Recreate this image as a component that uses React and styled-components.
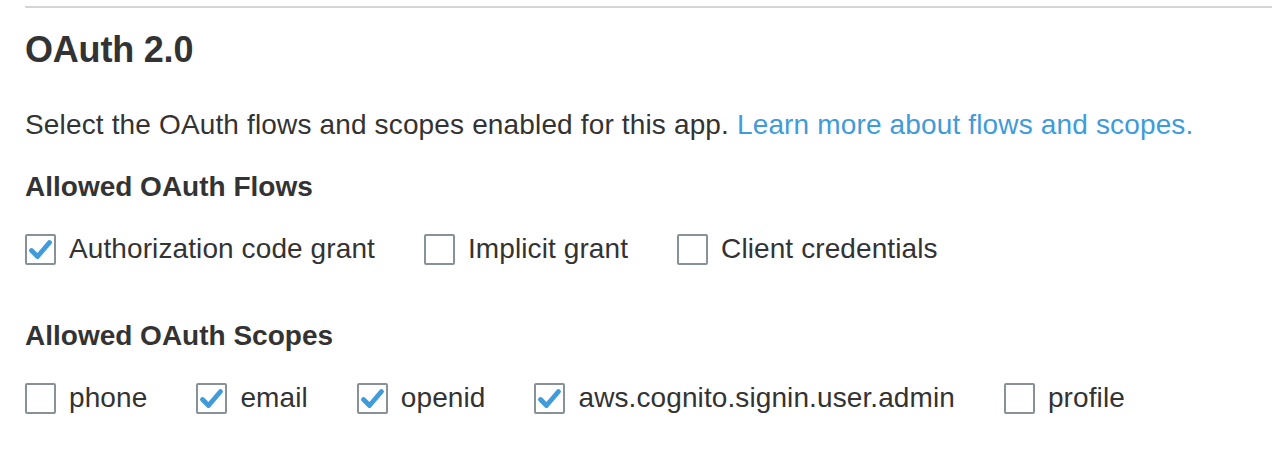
import React from "react";
import styled, { createGlobalStyle } from "styled-components";

const Global = createGlobalStyle`
  html, body { margin: 0; padding: 0; background: #fff; }
  body { font-family: "Liberation Sans", Helvetica, Arial, sans-serif; color: #333; }
`;

const Page = styled.div`
  padding-left: 25px;
`;

const Rule = styled.div`
  margin-top: 6px;
  height: 2px;
  background: #d5d5d5;
`;

const Title = styled.h2`
  margin: 22px 0 0;
  font-size: 36px;
  line-height: 40px;
  font-weight: 700;
  letter-spacing: -0.2px;
  color: #333;
`;

const Description = styled.p`
  margin: 39px 0 0;
  font-size: 28px;
  line-height: 32px;
  letter-spacing: 0.15px;
  color: #333;
`;

const Link = styled.a`
  color: #3f9bd9;
  text-decoration: none;
`;

const SectionHeader = styled.h3`
  margin: ${(p) => p.$gap}px 0 0;
  font-size: 28px;
  line-height: 32px;
  font-weight: 700;
  color: #333;
`;

const OptionRow = styled.div`
  display: flex;
  align-items: center;
  margin-top: ${(p) => p.$gap}px;
  gap: 49px;
`;

const Option = styled.label`
  display: flex;
  align-items: center;
  gap: 13px;
  font-size: 28px;
  line-height: 32px;
  letter-spacing: 0.1px;
  color: #333;
  cursor: pointer;
`;

const Box = styled.span`
  box-sizing: border-box;
  width: 31px;
  height: 31px;
  border: 2px solid #879196;
  border-radius: 2px;
  background: #fff;
  display: flex;
  align-items: center;
  justify-content: center;
`;

const Check = () => (
  <svg width="27" height="27" viewBox="0 0 27 27">
    <path
      d="M4.5 14.5 L10.5 20.5 L22.5 6.5"
      fill="none"
      stroke="#3f9bd9"
      strokeWidth="4.8"
      strokeLinecap="round"
      strokeLinejoin="round"
    />
  </svg>
);

const Checkbox = ({ checked, label }) => (
  <Option>
    <Box>{checked && <Check />}</Box>
    <span>{label}</span>
  </Option>
);

const flows = [
  { label: "Authorization code grant", checked: true },
  { label: "Implicit grant", checked: false },
  { label: "Client credentials", checked: false },
];

const scopes = [
  { label: "phone", checked: false },
  { label: "email", checked: true },
  { label: "openid", checked: true },
  { label: "aws.cognito.signin.user.admin", checked: true },
  { label: "profile", checked: false },
];

export default function App() {
  return (
    <Page>
      <Global />
      <Rule />
      <Title>OAuth 2.0</Title>
      <Description>
        Select the OAuth flows and scopes enabled for this app.{" "}
        <Link href="#">Learn more about flows and scopes.</Link>
      </Description>
      <SectionHeader $gap={30}>Allowed OAuth Flows</SectionHeader>
      <OptionRow $gap={30}>
        {flows.map((f) => (
          <Checkbox key={f.label} {...f} />
        ))}
      </OptionRow>
      <SectionHeader $gap={55}>Allowed OAuth Scopes</SectionHeader>
      <OptionRow $gap={30}>
        {scopes.map((s) => (
          <Checkbox key={s.label} {...s} />
        ))}
      </OptionRow>
    </Page>
  );
}
